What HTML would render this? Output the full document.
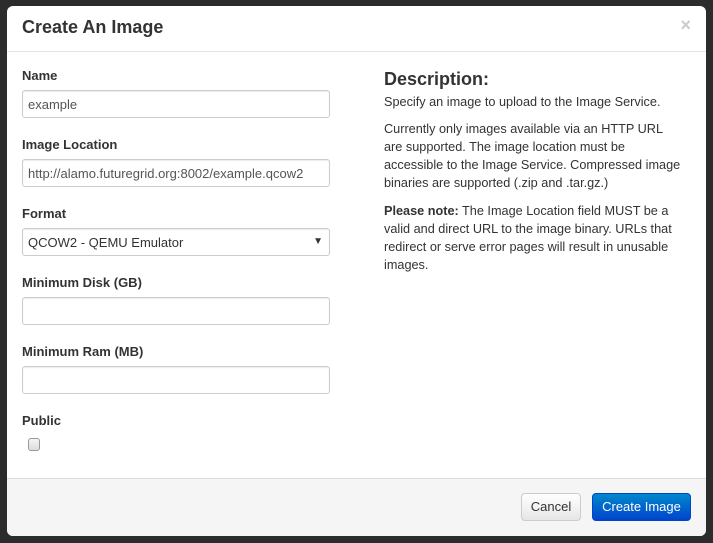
<!DOCTYPE html>
<html><head><style>
*{margin:0;padding:0;box-sizing:border-box}
body{width:713px;height:543px;background:#2c2c2c;font-family:"Liberation Sans",sans-serif;position:relative;overflow:hidden;color:#333}
.m{position:absolute;left:7px;top:6px;width:699px;height:530px;background:#fff;border-radius:6px;overflow:hidden}
.a{position:absolute}
.h{left:15px;top:11px;font-size:18px;font-weight:bold;color:#333}
.x{right:15px;top:9px;font-size:18px;color:#ccc;font-weight:bold}
.hl{left:0;top:45px;width:100%;border-top:1px solid #e5e5e5}
.l{left:15px;font-size:13px;font-weight:bold;color:#333}
.i{left:15px;width:308px;height:28px;border:1px solid #ccc;border-radius:3px;font-size:13px;padding:6px 5px;color:#555;box-shadow:inset 0 1px 1px rgba(0,0,0,.075)}
.d{left:377px;width:300px;font-size:12.7px;line-height:18px;color:#333}
.f{left:0;top:472px;width:100%;height:58px;background:#f5f5f5;border-top:1px solid #ddd}
.b{top:487px;height:28px;border-radius:4px;font-size:13px;text-align:center;line-height:26px}
</style></head><body>
<div class="m">
<div class="a h">Create An Image</div>
<div class="a x">×</div>
<div class="a hl"></div>
<div class="a l" style="top:62px">Name</div>
<div class="a i" style="top:84px">example</div>
<div class="a l" style="top:131px">Image Location</div>
<div class="a i" style="top:153px">http://alamo.futuregrid.org:8002/example.qcow2</div>
<div class="a l" style="top:200px">Format</div>
<div class="a i" style="top:222px;background:#fff;color:#333">QCOW2 - QEMU Emulator<span style="position:absolute;right:6px;top:7px;font-size:10px">▼</span></div>
<div class="a l" style="top:269px">Minimum Disk (GB)</div>
<div class="a i" style="top:291px"></div>
<div class="a l" style="top:338px">Minimum Ram (MB)</div>
<div class="a i" style="top:360px"></div>
<div class="a l" style="top:407px">Public</div>
<div class="a" style="left:21px;top:432px;width:12px;height:13px;border:1px solid #999;border-radius:3px;background:linear-gradient(#f4f4f4,#ddd)"></div>
<div class="a" style="left:377px;top:63px;font-size:18px;font-weight:bold;color:#333">Description:</div>
<div class="a d" style="top:87px">Specify an image to upload to the Image Service.</div>
<div class="a d" style="top:114px">Currently only images available via an HTTP URL<br>are supported. The image location must be<br>accessible to the Image Service. Compressed image<br>binaries are supported (.zip and .tar.gz.)</div>
<div class="a d" style="top:196px"><b>Please note:</b> The Image Location field MUST be a<br>valid and direct URL to the image binary. URLs that<br>redirect or serve error pages will result in unusable<br>images.</div>
<div class="a f"></div>
<div class="a b" style="left:514px;width:60px;border:1px solid #ccc;background:linear-gradient(#fff,#e6e6e6);color:#333">Cancel</div>
<div class="a b" style="left:585px;width:99px;border:1px solid #04c;background:linear-gradient(#08c,#04c);color:#fff">Create Image</div>
</div>
</body></html>
